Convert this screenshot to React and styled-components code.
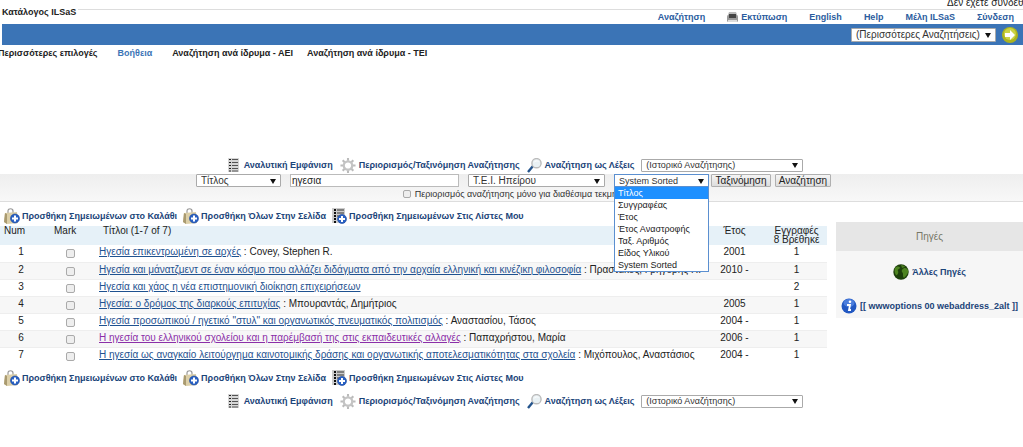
import React from "react";
import styled, { createGlobalStyle } from "styled-components";

const Global = createGlobalStyle`
  * { box-sizing: border-box; }
  body {
    margin: 0;
    background: #fff;
    color: #222;
    font: 10px/14px "Liberation Sans", Arial, sans-serif;
    overflow-x: hidden;
  }
  button, input, select { font-family: inherit; color: inherit; }
`;

const Page = styled.div`
  overflow: hidden;
`;

const Status = styled.div`
  height: 9px;
  overflow: hidden;
  display: flex;
  justify-content: flex-end;
  align-items: flex-end;
  white-space: nowrap;
  span { width: 76px; line-height: 12px; }
`;

const TopBar = styled.header`
  display: flex;
  justify-content: space-between;
  height: 15px;
`;

const Brand = styled.h1`
  margin: 0;
  padding-left: 2px;
  font-size: 9px;
  line-height: 6px;
  white-space: nowrap;
`;

const TopNav = styled.nav`
  flex: 1;
  display: flex;
  justify-content: flex-end;
  align-items: center;
  gap: 22px;
  padding-right: 9px;
  margin-left: 2px;
  border-top: 1px solid #ddd;
`;

const NavLink = styled.a`
  display: inline-flex;
  align-items: center;
  gap: 3px;
  color: #2b5c9e;
  font-size: 9px;
  line-height: 12px;
  font-weight: bold;
  text-decoration: none;
  white-space: nowrap;
`;

const BlueBar = styled.div`
  display: flex;
  justify-content: flex-end;
  align-items: center;
  gap: 6px;
  height: 21px;
  margin-left: 2px;
  padding-right: 5px;
  background: #3b74b6;
`;

const SelectBox = styled.span`
  position: relative;
  display: inline-block;
  width: ${(p) => p.$width}px;
  height: ${(p) => p.$height || 13}px;
  select {
    display: block;
    width: 100%;
    height: 100%;
    appearance: none;
    margin: 0;
    padding: 0 14px 0 4px;
    border: 1px solid ${(p) => (p.$open ? "#5b8fd0" : "#aaa")};
    border-radius: ${(p) => (p.$open ? 0 : 1)}px;
    background: #fff;
    font-size: ${(p) => p.$font || 10}px;
    color: #333;
  }
  > svg {
    position: absolute;
    right: 4px;
    top: calc(50% - 3px);
    pointer-events: none;
  }
`;

const RoundButton = styled.button`
  padding: 0;
  border: 0;
  background: none;
  width: 16px;
  height: 16px;
  svg { display: block; }
`;

const SubNav = styled.nav`
  display: flex;
  height: 111px;
  padding-top: 2px;
  margin-left: -2px;
  a { align-self: flex-start; color: #222; }
  a:nth-child(2) { color: #3b74b6; margin: 0 20px; }
  a:nth-child(4) { margin-left: 14px; }
`;

const Tools = styled.div`
  display: flex;
  justify-content: center;
  align-items: center;
  gap: 7px;
  height: 18px;
  margin-left: 8px;
`;

const ToolLink = styled.a`
  display: inline-flex;
  align-items: center;
  gap: ${(p) => p.$gap || 3}px;
  color: #1b4479;
  font-size: 9px;
  line-height: 12px;
  font-weight: bold;
  text-decoration: none;
  white-space: nowrap;
  svg { flex: none; }
`;

const SearchForm = styled.form`
  height: 28px;
  background: linear-gradient(#eee, #f8f8f8);
  border-bottom: 1px solid #ddd;
`;

const FormRow = styled.div`
  display: flex;
  justify-content: center;
  gap: 9px;
  padding-left: 6px;
`;

const Query = styled.input`
  width: 169px;
  height: 13px;
  padding: 0 1px;
  border: 1px solid #bbb;
  border-radius: 0;
  background: #fff;
  font-size: 10px;
`;

const SortGroup = styled.div`
  display: flex;
  gap: 2px;
`;

const Button = styled.button`
  height: 13px;
  padding: 0;
  width: ${(p) => p.$width}px;
  border: 1px solid #b0b0b0;
  border-radius: 1px;
  background: linear-gradient(#f5f5f5, #ddd);
  font-size: 10px;
  line-height: 11px;
  white-space: nowrap;
  margin-right: 2px;
`;

const Menu = styled.ul`
  position: absolute;
  z-index: 2;
  top: 100%;
  left: 0;
  width: 100%;
  margin: 0;
  padding: 0;
  list-style: none;
  background: #fff;
  border: 1px solid #5b8fd0;
  border-top: 0;
  font-size: 9px;
  color: #222;
`;

const MenuItem = styled.li`
  height: 12px;
  line-height: 12px;
  padding-left: 3px;
  white-space: nowrap;
  background: ${(p) => (p.$active ? "#1e90ff" : "none")};
  color: ${(p) => (p.$active ? "#fff" : "inherit")};
`;

const Limit = styled.label`
  display: flex;
  justify-content: center;
  align-items: center;
  gap: 4px;
  height: 14px;
  padding-left: 9px;
  font-size: 9px;
  color: #333;
  white-space: nowrap;
`;

const Tick = styled.input`
  appearance: none;
  display: block;
  width: ${(p) => p.$size || 9}px;
  height: ${(p) => p.$size || 9}px;
  margin: 0;
  border: 1px solid #aaa;
  border-radius: 2px;
  background: #eee;
  &:checked { background: #3b74b6; }
`;

const Columns = styled.div`
  display: flex;
  align-items: flex-start;
  gap: 9px;
  padding-bottom: 4px;
`;

const Results = styled.main`
  flex: 1;
  min-width: 0;
`;

const Actions = styled.div`
  display: flex;
  align-items: center;
  gap: 6px;
  height: 24px;
  padding: 4px 0 0 4px;
`;

const Table = styled.table`
  width: 100%;
  table-layout: fixed;
  border-collapse: collapse;
  th {
    height: 19px;
    padding: 0;
    background: #e6f1f8;
    font-weight: normal;
    font-size: 10px;
    line-height: 9px;
    vertical-align: top;
  }
  td {
    height: 17px;
    padding: 0;
    font-size: 10px;
    line-height: 14px;
    text-align: center;
    vertical-align: top;
    white-space: nowrap;
  }
  tbody tr:nth-child(even) td {
    background: #f7f7f7;
    border-top: 1px solid #eee;
    border-bottom: 1px solid #eee;
  }
  th:nth-child(1) { width: 42px; text-align: left; padding-left: 4px; }
  th:nth-child(2) { width: 57px; text-align: left; padding-left: 12px; }
  th:nth-child(3) { text-align: left; padding-left: 4px; }
  th:nth-child(4) { width: 63px; }
  th:nth-child(5) { width: 61px; }
  td:nth-child(2) input { margin: 4px 0 0 24px; }
  td:nth-child(3) { text-align: left; }
`;

const TitleLink = styled.a`
  color: ${(p) => (p.$visited ? "#8b2fa8" : "#1f5290")};
`;

const Side = styled.aside`
  width: 187px;
  margin-top: 20px;
  background: #f6f6f6;
  h2 {
    margin: 0;
    height: 29px;
    background: #e6e6e6;
    color: #777767;
    font-size: 10px;
    line-height: 29px;
    font-weight: normal;
    text-align: center;
  }
`;

const SideLinks = styled.div`
  display: flex;
  flex-direction: column;
  align-items: center;
  gap: 18px;
  padding: 13px 0 4px;
`;

const Arrow = () => (
  <svg width="8" height="7" viewBox="0 0 8 7" aria-hidden="true"><path d="M1 1h6L4 6z" fill="#111" /></svg>
);

const GoIcon = () => (
  <svg width="16" height="16" viewBox="0 0 16 16" aria-hidden="true">
    <circle cx="8" cy="8" r="8" fill="#aeb51d" />
    <circle cx="8" cy="7" r="6" fill="#cbd344" />
    <path d="M3 6h5V3l5 5-5 5v-3H3z" fill="#fff" />
  </svg>
);

const PrintIcon = () => (
  <svg width="11" height="11" viewBox="0 0 11 11" aria-hidden="true">
    <path d="M2 0h7l1.500 4h-10z" fill="#bbb" />
    <rect y="3" width="11" height="7" rx="1.500" fill="#999" />
    <path d="M2 2h7v4H2z" fill="#444" />
    <path d="M1 8h9v2H1z" fill="#ddd" />
  </svg>
);

const ListIcon = () => (
  <svg width="11" height="14" viewBox="0 0 11 14" aria-hidden="true">
    <path d="M0 0h11v14H0z" fill="#d6d6d6" />
    <path d="M1 1.500h2M1 4.500h2M1 7.500h2M1 10.500h2M1 13h2" stroke="#222" />
    <path d="M4 1.500h6M4 4.500h6M4 7.500h6M4 10.500h6M4 13h6" stroke="#555" />
  </svg>
);

const GearIcon = () => (
  <svg width="16" height="17" viewBox="-8.5 -8.5 17 17" aria-hidden="true">
    <g stroke="#bbb" strokeWidth="2.2">
      {[0, 45, 90, 135].map((a) => (
        <path key={a} d="M0-8V-5M0 5V8" transform={`rotate(${a})`} />
      ))}
    </g>
    <circle r="4.500" fill="#fff" stroke="#c4c4c4" strokeWidth="2.400" />
  </svg>
);

const LensIcon = () => (
  <svg width="15" height="15" viewBox="0 0 15 15" aria-hidden="true">
    <path d="M1 14l5-6" stroke="#24548c" strokeWidth="2.4" />
    <circle cx="9.5" cy="5.2" r="4.6" fill="#e9f1f4" stroke="#bbb" strokeWidth="1.4" />
    <path d="M7 4.5c1-2 3-2 4.500-1" stroke="#fff" fill="none" />
  </svg>
);

const Plus = ({ cx, cy }) => (
  <g>
    <circle cx={cx} cy={cy} r="4.500" fill="#2860c4" stroke="#1a469c" strokeWidth=".6" />
    <path d={`M${cx - 3} ${cy}h6M${cx} ${cy - 3}v6`} stroke="#fff" strokeWidth="2" />
  </g>
);

const BagIcon = () => (
  <svg width="16" height="17" viewBox="0 0 16 17" aria-hidden="true">
    <path d="M4 6V3c0-3 5-3 5 0v3" fill="none" stroke="#999" strokeWidth="1.2" />
    <path d="M1 5l12-1 1 11-11 1-3-2z" fill="#dccfa8" />
    <path d="M1 5l2 1v10l-3-2z" fill="#a99a70" />
    <Plus cx={11} cy={10.5} />
  </svg>
);

const ListAddIcon = () => (
  <svg width="15" height="17" viewBox="0 0 15 17" aria-hidden="true">
    <path d="M0 0h13v15H0z" fill="#ccc" />
    <path d="M2 2h2M2 5h2M2 8h2M2 11h2M2 14h2" stroke="#111" strokeWidth="2" />
    <path d="M5 2h7M5 5h7M5 8h3" stroke="#333" strokeWidth="1.200" />
    <Plus cx={10} cy={11} />
  </svg>
);

const GlobeIcon = () => (
  <svg width="16" height="16" viewBox="0 0 16 16" aria-hidden="true">
    <circle cx="8" cy="8" r="7.700" fill="#1d3f0b" />
    <path d="M2 4c3-3 5-1 5 0S4 5 5 7s-1 5-2 4-2-5-1-7zM9 6c2-3 5-2 6 0s-1 5-3 7-2-1-2-3-2-2-1-4z" fill="#4d8420" />
    <path d="M8 1c2 0 4 1 4 2L9 4z" fill="#477c1e" />
  </svg>
);

const InfoIcon = () => (
  <svg width="16" height="16" viewBox="0 0 16 16" aria-hidden="true">
    <circle cx="8" cy="8" r="7.500" fill="#2258c2" />
    <ellipse cx="8" cy="5" rx="5.500" ry="4" fill="#4a7ddd" />
    <circle cx="9" cy="3.800" r="1.300" fill="#fff" />
    <path d="M6 7h3L8 12h2" fill="none" stroke="#fff" strokeWidth="1.800" />
  </svg>
);

const Select = ({ label, children, extra, ...rest }) => (
  <SelectBox {...rest}>
    <select aria-label={label}><option>{children}</option></select>
    <Arrow />
    {extra}
  </SelectBox>
);

const ToolRow = () => (
  <Tools>
    <ToolLink href="#" $gap={5}><ListIcon />Αναλυτική Εμφάνιση</ToolLink>
    <ToolLink href="#"><GearIcon />Περιορισμός/Ταξινόμηση Αναζήτησης</ToolLink>
    <ToolLink href="#"><LensIcon />Αναζήτηση ως Λέξεις</ToolLink>
    <Select label="Ιστορικό Αναζήτησης" $width={162} $font={9}>(Ιστορικό Αναζήτησης)</Select>
  </Tools>
);

const ActionRow = () => (
  <Actions>
    <ToolLink href="#" $gap={2}><BagIcon />Προσθήκη Σημειωμένων στο Καλάθι</ToolLink>
    <ToolLink href="#" $gap={2}><BagIcon />Προσθήκη Όλων Στην Σελίδα</ToolLink>
    <ToolLink href="#" $gap={2}><ListAddIcon />Προσθήκη Σημειωμένων Στις Λίστες Μου</ToolLink>
  </Actions>
);

const sortOptions = ["Τίτλος", "Συγγραφέας", "Έτος", "Έτος Αναστροφής", "Ταξ. Αριθμός", "Είδος Υλικού", "System Sorted"];

const rows = [
  ["Ηγεσία επικεντρωμένη σε αρχές", "Covey, Stephen R.", "2001", 1],
  ["Ηγεσία και μάνατζμεντ σε έναν κόσμο που αλλάζει διδάγματα από την αρχαία ελληνική και κινέζικη φιλοσοφία", "Πραστάκος, Γρηγόρης Π.", "2010 -", 1],
  ["Ηγεσία και χάος η νέα επιστημονική διοίκηση επιχειρήσεων", "", "", 2],
  ["Ηγεσία: ο δρόμος της διαρκούς επιτυχίας", "Μπουραντάς, Δημήτριος", "2005", 1],
  ["Ηγεσία προσωπικού / ηγετικό \"στυλ\" και οργανωτικός πνευματικός πολιτισμός", "Αναστασίου, Τάσος", "2004 -", 1],
  ["Η ηγεσία του ελληνικού σχολείου και η παρέμβασή της στις εκπαιδευτικές αλλαγές", "Παπαχρήστου, Μαρία", "2006 -", 1],
  ["Η ηγεσία ως αναγκαίο λειτούργημα καινοτομικής δράσης και οργανωτικής αποτελεσματικότητας στα σχολεία", "Μιχόπουλος, Αναστάσιος", "2004 -", 1],
];

export default function App() {
  return (
    <Page>
      <Global />
      <Status><span>Δεν έχετε συνδεθεί</span></Status>
      <TopBar>
        <Brand>Κατάλογος ILSaS</Brand>
        <TopNav>
          <NavLink href="#">Αναζήτηση</NavLink>
          <NavLink href="#"><PrintIcon />Εκτύπωση</NavLink>
          <NavLink href="#">English</NavLink>
          <NavLink href="#">Help</NavLink>
          <NavLink href="#">Μέλη ILSaS</NavLink>
          <NavLink href="#">Σύνδεση</NavLink>
        </TopNav>
      </TopBar>
      <BlueBar>
        <Select label="Περισσότερες Αναζητήσεις" $width={145} $height={14}>(Περισσότερες Αναζητήσεις)</Select>
        <RoundButton aria-label="Μετάβαση"><GoIcon /></RoundButton>
      </BlueBar>
      <SubNav>
        <NavLink href="#">Περισσότερες επιλογές</NavLink>
        <NavLink href="#">Βοήθεια</NavLink>
        <NavLink href="#">Αναζήτηση ανά ίδρυμα - ΑΕΙ</NavLink>
        <NavLink href="#">Αναζήτηση ανά ίδρυμα - ΤΕΙ</NavLink>
      </SubNav>
      <ToolRow />
      <SearchForm onSubmit={(e) => e.preventDefault()}>
        <FormRow>
          <Select label="Πεδίο" $width={85}>Τίτλος</Select>
          <Query aria-label="Όροι αναζήτησης" defaultValue="ηγεσια" />
          <Select label="Ίδρυμα" $width={137}>Τ.Ε.Ι. Ηπείρου</Select>
          <SortGroup>
            <Select
              label="Ταξινόμηση κατά"
              $width={95}
              $font={9}
              $open
              extra={
                <Menu role="listbox" aria-label="Ταξινόμηση κατά">
                  {sortOptions.map((o, i) => (
                    <MenuItem key={o} role="option" aria-selected={i === 0} $active={i === 0}>{o}</MenuItem>
                  ))}
                </Menu>
              }
            >System Sorted</Select>
            <Button type="submit" $width={60}>Ταξινόμηση</Button>
            <Button type="submit" $width={56}>Αναζήτηση</Button>
          </SortGroup>
        </FormRow>
        <Limit><Tick type="checkbox" $size={8} />Περιορισμός αναζήτησης μόνο για διαθέσιμα τεκμήρια</Limit>
      </SearchForm>
      <Columns>
        <Results>
          <ActionRow />
          <Table>
            <thead>
              <tr><th>Num</th><th>Mark</th><th>Τίτλοι (1-7 of 7)</th><th>Έτος</th><th>Εγγραφές<br />8 Βρέθηκε</th></tr>
            </thead>
            <tbody>
              {rows.map(([title, author, year, count], i) => (
                <tr key={title}>
                  <td>{i + 1}</td>
                  <td><Tick type="checkbox" aria-label={title} /></td>
                  <td><TitleLink href="#" $visited={i === 5}>{title}</TitleLink>{author && ` : ${author}`}</td>
                  <td>{year}</td>
                  <td>{count}</td>
                </tr>
              ))}
            </tbody>
          </Table>
          <ActionRow />
        </Results>
        <Side>
          <h2>Πηγές</h2>
          <SideLinks>
            <ToolLink href="#"><GlobeIcon />Άλλες Πηγές</ToolLink>
            <ToolLink href="#"><InfoIcon />[[ wwwoptions 00 webaddress_2alt ]]</ToolLink>
          </SideLinks>
        </Side>
      </Columns>
      <ToolRow />
    </Page>
  );
}
